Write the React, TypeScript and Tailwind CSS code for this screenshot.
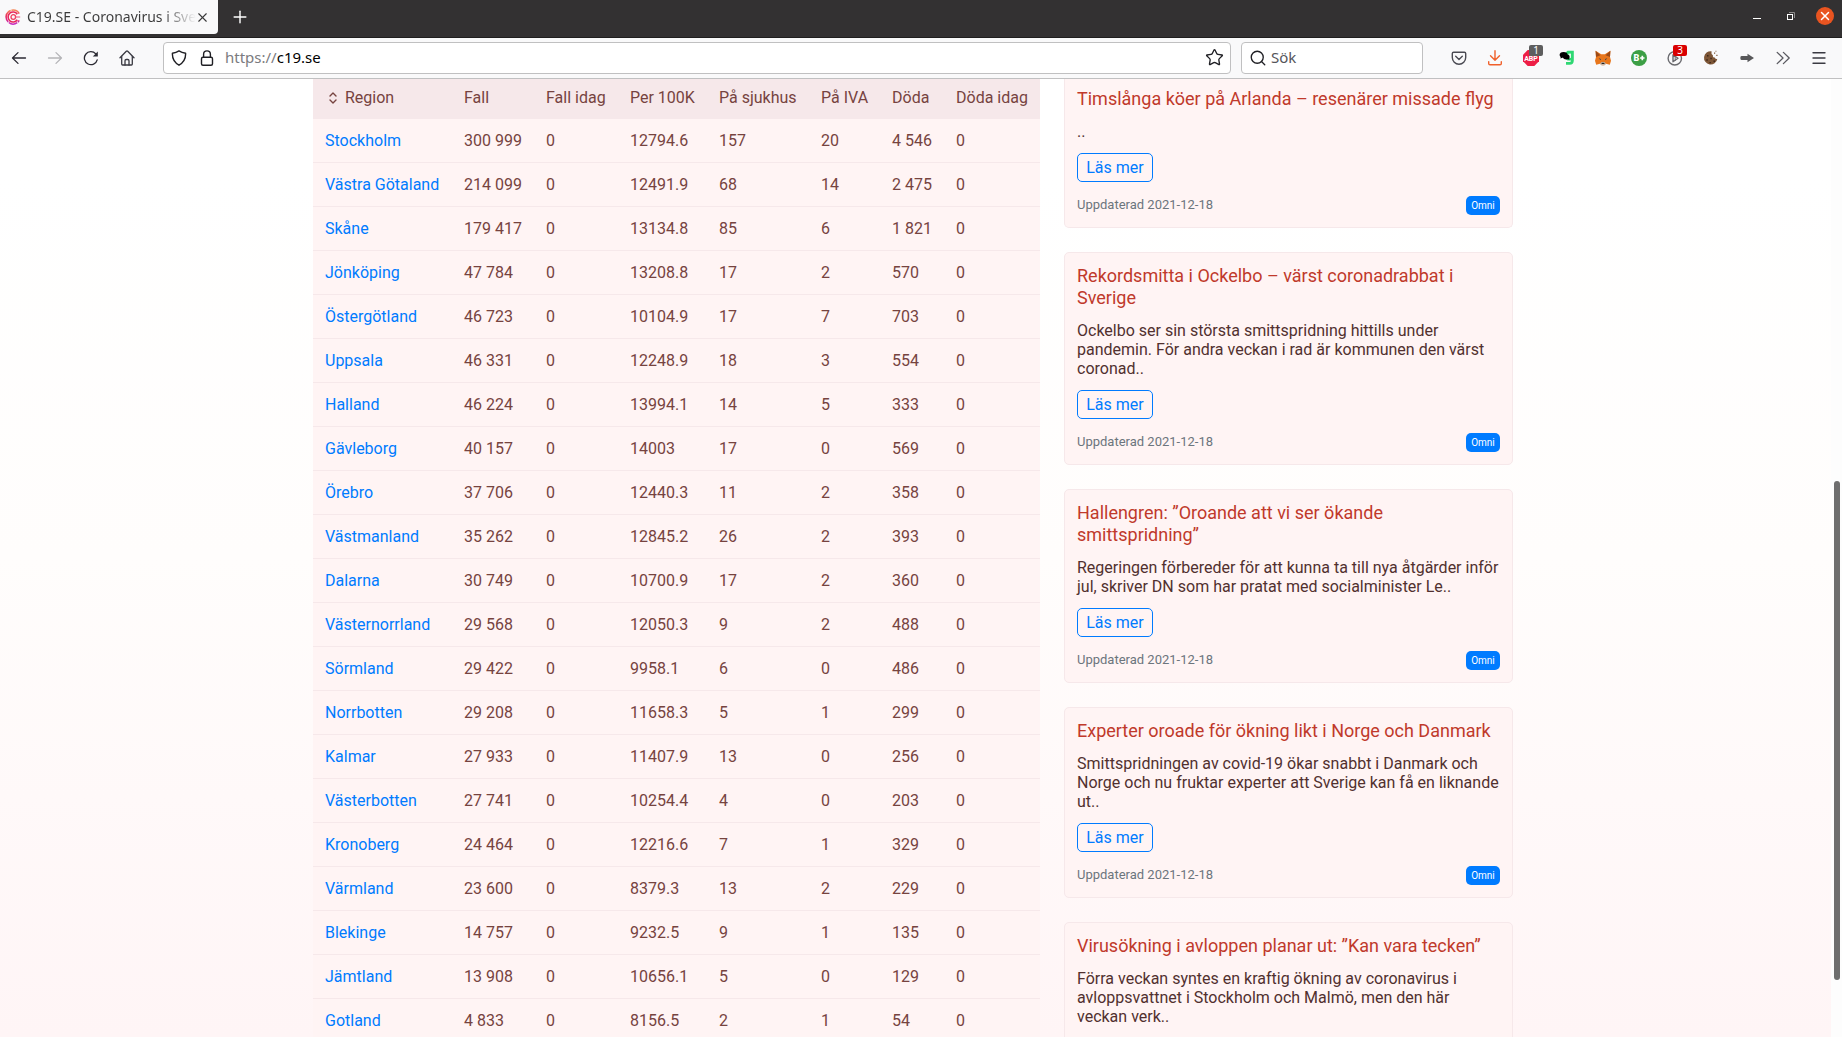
import React from "react";
import { Menu, Plus, Search, Star, X } from "lucide-react";

const columns = [
  { title: "Fall", width: "w-[82px]" },
  { title: "Fall idag", width: "w-[84px]" },
  { title: "Per 100K", width: "w-[89px]" },
  { title: "På sjukhus", width: "w-[102px]" },
  { title: "På IVA", width: "w-[71px]" },
  { title: "Döda", width: "w-[64px]" },
  { title: "Döda idag", width: "w-[96px]" },
];

const regions = [
  ["Stockholm", "300 999", "0", "12794.6", "157", "20", "4 546", "0"],
  ["Västra Götaland", "214 099", "0", "12491.9", "68", "14", "2 475", "0"],
  ["Skåne", "179 417", "0", "13134.8", "85", "6", "1 821", "0"],
  ["Jönköping", "47 784", "0", "13208.8", "17", "2", "570", "0"],
  ["Östergötland", "46 723", "0", "10104.9", "17", "7", "703", "0"],
  ["Uppsala", "46 331", "0", "12248.9", "18", "3", "554", "0"],
  ["Halland", "46 224", "0", "13994.1", "14", "5", "333", "0"],
  ["Gävleborg", "40 157", "0", "14003", "17", "0", "569", "0"],
  ["Örebro", "37 706", "0", "12440.3", "11", "2", "358", "0"],
  ["Västmanland", "35 262", "0", "12845.2", "26", "2", "393", "0"],
  ["Dalarna", "30 749", "0", "10700.9", "17", "2", "360", "0"],
  ["Västernorrland", "29 568", "0", "12050.3", "9", "2", "488", "0"],
  ["Sörmland", "29 422", "0", "9958.1", "6", "0", "486", "0"],
  ["Norrbotten", "29 208", "0", "11658.3", "5", "1", "299", "0"],
  ["Kalmar", "27 933", "0", "11407.9", "13", "0", "256", "0"],
  ["Västerbotten", "27 741", "0", "10254.4", "4", "0", "203", "0"],
  ["Kronoberg", "24 464", "0", "12216.6", "7", "1", "329", "0"],
  ["Värmland", "23 600", "0", "8379.3", "13", "2", "229", "0"],
  ["Blekinge", "14 757", "0", "9232.5", "9", "1", "135", "0"],
  ["Jämtland", "13 908", "0", "10656.1", "5", "0", "129", "0"],
  ["Gotland", "4 833", "0", "8156.5", "2", "1", "54", "0"],
];

const news = [
  { title: "Timslånga köer på Arlanda – resenärer missade flyg", text: ".." },
  {
    title: "Rekordsmitta i Ockelbo – värst coronadrabbat i Sverige",
    text: "Ockelbo ser sin största smittspridning hittills under pandemin. För andra veckan i rad är kommunen den värst coronad..",
  },
  {
    title: "Hallengren: ”Oroande att vi ser ökande smittspridning”",
    text: "Regeringen förbereder för att kunna ta till nya åtgärder inför jul, skriver DN som har pratat med socialminister Le..",
  },
  {
    title: "Experter oroade för ökning likt i Norge och Danmark",
    text: "Smittspridningen av covid-19 ökar snabbt i Danmark och Norge och nu fruktar experter att Sverige kan få en liknande ut..",
  },
  {
    title: "Virusökning i avloppen planar ut: ”Kan vara tecken”",
    text: "Förra veckan syntes en kraftig ökning av coronavirus i avloppsvattnet i Stockholm och Malmö, men den här veckan verk..",
  },
];

const Favicon = () => (
  <svg viewBox="0 0 16 16" className="h-4 w-4 shrink-0" fill="none">
    <defs>
      <linearGradient id="fav" x1="0" y1="0" x2="0" y2="1">
        <stop offset="0" stopColor="#f58a5b" />
        <stop offset="0.45" stopColor="#e8285a" />
        <stop offset="1" stopColor="#c52bc0" />
      </linearGradient>
    </defs>
    <path d="M14.2 4.600A7 7 0 1 0 14.200 11.400" stroke="url(#fav)" strokeWidth="1.500" strokeDasharray="9 0.800 14 0.800" />
    <path d="M12.300 5.300A5 5 0 1 0 12.300 10.700" stroke="#e8285a" strokeWidth="1.600" />
    <circle cx="8.300" cy="8" r="2.300" stroke="#ee3f5f" strokeWidth="1.300" />
    <path d="M10.600 8h4.600" stroke="#f0507a" strokeWidth="1" />
  </svg>
);

const BackIcon = () => (
  <svg viewBox="0 0 16 16" className="h-4 w-4" fill="none" stroke="#2b2a33" strokeWidth="1.300" strokeLinecap="round" strokeLinejoin="round">
    <path d="M1.500 8h13M7 2.600 1.500 8 7 13.400" />
  </svg>
);

const ForwardIcon = () => (
  <svg viewBox="0 0 16 16" className="h-4 w-4" fill="none" stroke="#b5b5b8" strokeWidth="1.300" strokeLinecap="round" strokeLinejoin="round">
    <path d="M1.500 8h13M9 2.600 14.500 8 9 13.400" />
  </svg>
);

const ReloadIcon = () => (
  <svg viewBox="0 0 16 16" className="h-4 w-4" fill="none" stroke="#2b2a33" strokeWidth="1.300" strokeLinecap="round">
    <path d="M14.200 9.800A6.500 6.500 0 1 1 12.800 3.900" />
    <path d="M14.800 1.400v5H9.800z" fill="#2b2a33" stroke="none" />
  </svg>
);

const HomeIcon = () => (
  <svg viewBox="0 0 16 16" className="h-4 w-4" fill="none" stroke="#3a3a42" strokeWidth="1.300" strokeLinecap="round" strokeLinejoin="round">
    <path d="M1 7.800 7.300 1.300q.7-.6 1.400 0L15 7.800" />
    <path d="M2.700 6.500v7.600q0 .9.900.9h8.800q.9 0 .9-.9V6.500" />
    <path d="M6 15v-4.300q0-1.200 1.200-1.200h1.600q1.200 0 1.200 1.200V15" />
  </svg>
);

const ShieldIcon = () => (
  <svg viewBox="0 0 16 16" className="h-4 w-4 shrink-0" fill="none" stroke="#1f1f24" strokeWidth="1.400" strokeLinejoin="round">
    <path d="M8 .9Q10.800 2.800 14.600 3.200 15 11.200 8 15.200 1 11.200 1.400 3.200 5.200 2.800 8 .9z" />
  </svg>
);

const LockIcon = () => (
  <svg viewBox="0 0 16 16" className="h-4 w-4 shrink-0" fill="none" stroke="#1f1f24" strokeWidth="1.400">
    <rect x="2.500" y="7.200" width="11" height="8" rx="1.500" />
    <path d="M4.600 7V4.300a3.400 3.400 0 0 1 6.800 0V7" />
  </svg>
);

const PocketIcon = () => (
  <svg viewBox="0 0 16 16" className="h-4 w-4" fill="none" stroke="#4a4a52" strokeWidth="1.400" strokeLinecap="round" strokeLinejoin="round">
    <path d="M2.600 2.200h10.800q1.300 0 1.300 1.300v4a6.700 6.700 0 0 1-13.400 0v-4q0-1.300 1.300-1.300z" />
    <path d="m4.700 6.300 3.300 3.100 3.300-3.100" />
  </svg>
);

const DownloadIcon = () => (
  <svg viewBox="0 0 16 16" className="h-4 w-4" fill="none" stroke="#f0602a" strokeWidth="1.400" strokeLinecap="round" strokeLinejoin="round">
    <path d="M8 .8v9.500M3.500 5.800 8 10.300l4.500-4.500" />
    <path d="M1.700 11.800v1.600q0 1.300 1.300 1.300h10q1.300 0 1.300-1.300v-1.600" />
  </svg>
);

const AdblockIcon = () => (
  <svg viewBox="0 0 16 16" className="h-4 w-4">
    <path d="M4.700 0h6.600L16 4.700v6.600L11.300 16H4.700L0 11.300V4.700z" fill="#ed1e45" />
    <text x="8" y="10.800" textAnchor="middle" fill="#fff" fontSize="7" fontWeight="700" fontFamily="Roboto, sans-serif">
      ABP
    </text>
  </svg>
);

const ChatIcon = () => (
  <svg viewBox="0 0 16 16" className="h-4 w-4">
    <path d="M8.500.8h6.300v9.700q0 4.200-4.200 4.200H7v-2.600h3.400q1.600 0 1.600-1.600H8.500q-2-1-2-4.900t2-4.800z" fill="#2fd873" />
    <path d="M9.500 3.600H12v4.300H9.500z" fill="#e3f8ea" />
    <ellipse cx="4.600" cy="4.800" rx="4" ry="2.900" />
    <ellipse cx="7.300" cy="7" rx="3.300" ry="2.400" />
    <path d="m1.700 6.500-.2 2L4 7.500zM8.500 8.500l1.800 1.700-.2-2.700z" />
  </svg>
);

const FoxIcon = () => (
  <svg viewBox="0 0 16 16" className="h-4 w-4">
    <path d="M.6.700 6.200 4.200h3.600L15.400.700 15 7l1 3.800-1.200 3.900-3.800-1-1.700 1.500H6.700L5 13.700l-3.800 1L0 10.800 1 7z" fill="#e8761b" />
    <path d="m.6.700 4.800 4.500L1 7zM15.400.700l-4.800 4.500L15 7z" fill="#9c4a17" />
    <path d="m3.700 8.200 2.200.8-.3 1.300zM12.300 8.200l-2.200.8.3 1.300z" fill="#263a52" />
    <path d="M5 13.700 6.500 12h3l1.500 1.700-1.700 1.500H6.700z" fill="#c8b7a8" />
    <path d="M6.600 12.800h2.800v1.200H6.600z" fill="#2a211c" />
  </svg>
);

const PlusBadgeIcon = () => (
  <svg viewBox="0 0 16 16" className="h-4 w-4">
    <circle cx="8" cy="8" r="8" fill="#3c9f45" />
    <text x="2.500" y="11.200" fill="#fff" fontSize="9" fontWeight="900" fontFamily="Roboto, sans-serif">
      B
    </text>
    <path d="M11.300 5.800v4.400M9.100 8h4.400" stroke="#fff" strokeWidth="1.700" />
  </svg>
);

const PlayIcon = () => (
  <svg viewBox="0 0 16 16" className="h-4 w-4" fill="none" stroke="#6a6a6e" strokeWidth="1.400" strokeLinejoin="round">
    <circle cx="7.800" cy="8.300" r="6.700" />
    <path d="M6 4.800v7l5-3.500z" />
    <path d="M8.200 5.500v5.500" strokeWidth="1" />
  </svg>
);

const CookieIcon = () => (
  <svg viewBox="0 0 16 16" className="h-4 w-4">
    <path d="M8.500 1.200A6.700 6.700 0 1 0 14.300 9q-2 .3-2.500-1.500-2.300 0-1.900-2.300-2-.9-1.400-4z" fill="#7d5636" />
    <path d="M4 5h1.500v1.500H4zM7.300 7.800h1.500v1.500H7.300zM3.300 9.300h1.500v1.500H3.300zM6.400 12h1.500v1.300H6.400zM10.500 10.500H12V12h-1.500z" fill="#40291a" />
    <path d="M11 2.500h1.200v1.200H11zM13.300 4.800h1.200V6h-1.200zM12.500.800h.9v.9h-.9z" fill="#7d5636" />
  </svg>
);

const BoldArrowIcon = () => (
  <svg viewBox="0 0 16 16" className="h-4 w-4" fill="#58585a">
    <path d="M2.500 6H8.500V3.700L15 8l-6.500 4.300V10h-6Q1.300 10 1.300 8t1.200-2z" />
  </svg>
);

const OverflowIcon = () => (
  <svg viewBox="0 0 16 16" className="h-4 w-4" fill="none" stroke="#5a5a60" strokeWidth="1.300" strokeLinecap="round" strokeLinejoin="round">
    <path d="m2.200 2.400 5.800 5.600-5.800 5.600M8.400 2.400 14.200 8l-5.800 5.600" />
  </svg>
);

const RestoreIcon = () => (
  <svg viewBox="0 0 10 10" className="h-2.5 w-2.5" fill="none">
    <path d="M3 1.500h5.500V7" stroke="#8c8b8b" />
    <rect x="1.500" y="3.500" width="5" height="5" stroke="#fff" />
  </svg>
);

const SortIcon = () => (
  <svg viewBox="0 0 10 12" className="h-3 w-2.5" fill="none" stroke="#76433f" strokeWidth="1.400" strokeLinecap="round" strokeLinejoin="round">
    <path d="m2 4 3-3 3 3M2 8l3 3 3-3" />
  </svg>
);

const extensions = [
  { label: "Pocket", icon: PocketIcon },
  { label: "Hämtningar", icon: DownloadIcon },
  { label: "Adblock", icon: AdblockIcon, badge: "1", badgeColor: "bg-[#5e5e5e]" },
  { label: "Chatt", icon: ChatIcon },
  { label: "MetaMask", icon: FoxIcon },
  { label: "B+", icon: PlusBadgeIcon },
  { label: "Spela", icon: PlayIcon, badge: "3", badgeColor: "bg-[#d90000]" },
  { label: "Kakor", icon: CookieIcon },
  { label: "Skicka", icon: BoldArrowIcon },
];

const ToolButton = ({ label, children }: { label: string; children: React.ReactNode }) => (
  <button aria-label={label} className="relative flex h-8 w-9 shrink-0 items-center justify-center">
    {children}
  </button>
);

const TabBar = () => (
  <div className="flex h-[38px] shrink-0 items-start justify-between border-b border-[#1f1e1e] bg-[#333132]">
    <div className="flex items-center">
      <div className="flex h-[34px] w-[218px] items-center rounded-br bg-[#f9f9fa] pl-[5px] pr-2.5">
        <Favicon />
        <span className="ml-1.5 w-[169px] overflow-hidden whitespace-nowrap bg-linear-to-r from-[#3a3a3a] from-80% to-transparent bg-clip-text text-[14px] leading-5 text-transparent">
          C19.SE - Coronavirus i Sverige
        </span>
        <button aria-label="Stäng flik" className="flex w-3 shrink-0 justify-center">
          <X className="h-[15px] w-[15px] shrink-0 text-[#3a3a3a]" strokeWidth={1.8} />
        </button>
      </div>
      <button aria-label="Ny flik" className="ml-3 flex h-[34px] w-5 items-center justify-center text-white">
        <Plus className="h-5 w-5 shrink-0" strokeWidth={1.7} />
      </button>
    </div>
    <div className="flex h-8 items-center">
      <button aria-label="Minimera" className="flex h-2.5 w-[34px] items-end justify-center pb-0.5">
        <span className="h-px w-2 bg-white" />
      </button>
      <button aria-label="Återställ" className="flex w-[34px] justify-center">
        <RestoreIcon />
      </button>
      <button aria-label="Stäng" className="flex w-[34px] justify-center">
        <span className="flex h-[18px] w-[18px] items-center justify-center rounded-full bg-[#e95420] text-white">
          <X className="h-3.5 w-3.5" strokeWidth={2.5} />
        </span>
      </button>
    </div>
  </div>
);

const Toolbar = () => (
  <div className="flex h-[41px] shrink-0 items-center border-b border-[#c0c0c1] bg-[#f9f9fa] pb-px pl-px pr-[5px]">
    <ToolButton label="Bakåt">
      <BackIcon />
    </ToolButton>
    <ToolButton label="Framåt">
      <ForwardIcon />
    </ToolButton>
    <ToolButton label="Ladda om">
      <ReloadIcon />
    </ToolButton>
    <ToolButton label="Hem">
      <HomeIcon />
    </ToolButton>

    <div className="ml-[18px] flex h-8 grow items-center rounded border border-[#c0c0c1] bg-white pl-[7px] pr-1.5">
      <ShieldIcon />
      <span className="ml-3 flex">
        <LockIcon />
      </span>
      <label htmlFor="url" className="ml-2.5 text-[15px] text-[#7b7b80]">
        https://
      </label>
      <input id="url" defaultValue="c19.se" className="min-w-0 grow bg-transparent text-[15px] text-black outline-none" />
      <button aria-label="Bokmärk">
        <Star className="h-[19px] w-[19px] text-[#1f1f24]" strokeWidth={1.7} />
      </button>
    </div>
    <div className="ml-2.5 flex h-8 w-[182px] items-center rounded border border-[#c0c0c1] bg-white pl-[7px]">
      <Search className="h-[18px] w-[18px] shrink-0 text-[#1f1f24]" strokeWidth={1.8} />
      <input aria-label="Sök" placeholder="Sök" className="ml-1 min-w-0 grow text-[15px] outline-none placeholder:text-[#55555a]" />
    </div>

    <div className="ml-[18px] flex">
      {extensions.map((ext) => (
        <ToolButton key={ext.label} label={ext.label}>
          <ext.icon />
          {ext.badge && (
            <span className={`absolute left-[16px] top-[3px] h-[11px] w-[14px] rounded-xs text-center text-[10px] leading-[11px] text-white ${ext.badgeColor}`}>
              {ext.badge}
            </span>
          )}
        </ToolButton>
      ))}
      <ToolButton label="Fler verktyg">
        <OverflowIcon />
      </ToolButton>
      <ToolButton label="Meny">
        <Menu className="h-[18px] w-[18px] text-[#3a3a42]" strokeWidth={1.8} />
      </ToolButton>
    </div>
  </div>
);

const RegionTable = () => (
  <table className="w-full table-fixed text-left text-[16px] leading-[19px] text-[#76433f]">
    <thead className="bg-[#f6e8ea]">
      <tr>
        <th className="w-[139px] px-3 pb-[11px] pt-[9px] font-normal">
          <span className="flex items-center gap-[7px] pl-[3px]">
            <SortIcon />
            Region
          </span>
        </th>
        {columns.map((col) => (
          <th key={col.title} className={`whitespace-nowrap pb-[11px] pl-3 pt-[9px] font-normal ${col.width}`}>
            {col.title}
          </th>
        ))}
      </tr>
    </thead>
    <tbody className="bg-[#fff4f4]">
      {regions.map(([name, ...values]) => (
        <tr key={name} className="border-t border-[#f6e8ea]">
          <td className="whitespace-nowrap py-3 pl-3">
            <a href="#" className="text-[#007bff]">{name}</a>
          </td>
          {values.map((value, idx) => (
            <td key={idx} className="whitespace-nowrap py-3 pl-3">{value}</td>
          ))}
        </tr>
      ))}
    </tbody>
  </table>
);

const NewsCard = ({ title, text, cut }: { title: string; text: string; cut: boolean }) => (
  <article
    className={`border border-[#f6e8ea] bg-[#fff4f4] px-3 pb-3 ${cut ? "rounded-b-[5px] border-t-0 pt-[9px]" : "rounded-[5px] pt-3"}`}
  >
    <h5 className="text-[18px] leading-[22px] text-[#c0392b]">{title}</h5>
    <p className="mt-3 text-[16px] leading-[19px] text-[#51302f]">{text}</p>
    <a href="#" className="mt-3 flex h-[29px] w-[76px] items-center justify-center rounded-[5px] border border-[#007bff] text-[16px] text-[#007bff]">
      Läs mer
    </a>
    <div className="mt-3.5 flex h-[19px] items-start justify-between">
      <small className="text-[13px] leading-[18px] text-[#6c757d]">Uppdaterad 2021-12-18</small>
      <span className="flex h-[19px] w-[34px] items-center justify-center rounded-[5px] bg-[#007bff] text-[10px] text-white">
        Omni
      </span>
    </div>
  </article>
);

export default function App() {
  return (
    <div className="flex h-screen flex-col overflow-hidden font-['Noto_Sans',sans-serif]">
      <TabBar />
      <Toolbar />
      <div className="flex min-h-0 grow">
        <main className="grow overflow-hidden bg-linear-to-b from-white from-10% via-[#fffdfc] via-50% to-[#fff5f6] pr-[5px] font-['Roboto',sans-serif]">
          <div className="mx-auto flex max-w-[1200px] items-start gap-6">
            <section className="min-w-0 grow">
              <RegionTable />
            </section>
            <aside className="flex w-[449px] shrink-0 flex-col gap-6">
              {news.map((item, idx) => (
                <NewsCard key={item.title} title={item.title} text={item.text} cut={idx === 0} />
              ))}
            </aside>
          </div>
        </main>
        <div className="flex w-[11px] shrink-0 flex-col items-center bg-[#fdfdfd]">
          <div className="h-[42%]" />
          <div className="h-[52%] w-1.5 rounded-full bg-[#6e6e6e]" />
        </div>
      </div>
    </div>
  );
}
